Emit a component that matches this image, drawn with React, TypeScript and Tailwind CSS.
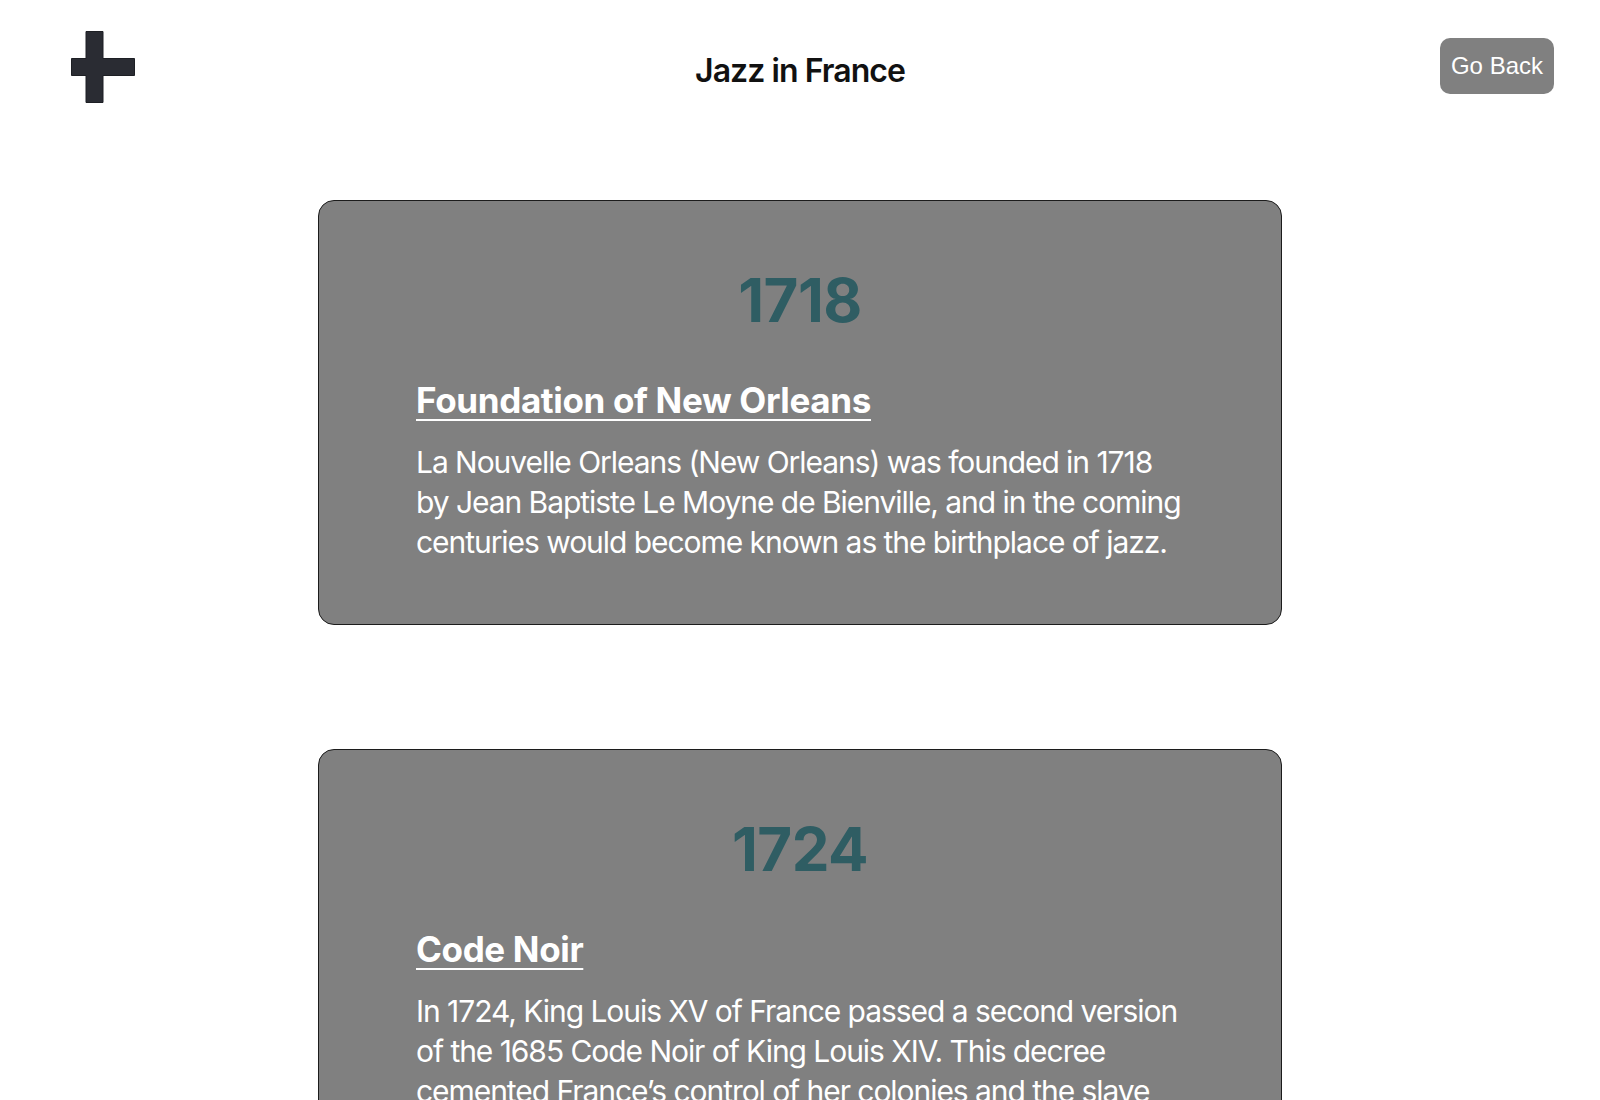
const events = [
  {
    year: "1718",
    title: "Foundation of New Orleans",
    lines: [
      "La Nouvelle Orleans (New Orleans) was founded in 1718",
      "by Jean Baptiste Le Moyne de Bienville, and in the coming",
      "centuries would become known as the birthplace of jazz.",
    ],
  },
  {
    year: "1724",
    title: "Code Noir",
    lines: [
      "In 1724, King Louis XV of France passed a second version",
      "of the 1685 Code Noir of King Louis XIV. This decree",
      "cemented France’s control of her colonies and the slave",
      "trade, and set the rules for the lives of enslaved people.",
    ],
  },
];

function PlusIcon() {
  return (
    <svg width="64" height="72" viewBox="0 0 64 72" className="block">
      <path
        d="M15 0.5h17v27h31.5v17H32v27H15v-27H0.5v-17H15z"
        fill="#2a2c33"
        stroke="#1d1f24"
        strokeWidth="1"
      />
    </svg>
  );
}

export default function App() {
  return (
    <div className="min-h-screen bg-white font-['Inter',sans-serif]">
      <header className="grid grid-cols-[1fr_auto_1fr] items-start pt-[31px]">
        <div className="ml-[71px] justify-self-start">
          <PlusIcon />
        </div>
        <h1 className="mt-[24px] text-[32px] font-semibold leading-none tracking-[-0.03em] text-[#111111]">
          Jazz in France
        </h1>
        <button className="mr-[46px] mt-[7px] flex h-[56px] items-center justify-self-end rounded-[10px] bg-[#808080] px-[11px] font-['Liberation_Sans',sans-serif] text-[24px] text-white">
          Go Back
        </button>
      </header>

      <main className="mt-[97px] flex flex-col items-center gap-[124px] pb-20">
        {events.map((ev) => (
          <section
            key={ev.year}
            className="w-[964px] rounded-[16px] border border-[#1c1c1c] bg-[#808080] pt-[69px] pb-[62px]"
          >
            <h2 className="text-center text-[60px] font-bold leading-none tracking-[-0.01em] text-[#2f5d63]">
              {ev.year}
            </h2>
            <div className="mx-auto mt-[53px] w-[768px]">
              <h3 className="text-[35px] font-bold leading-none tracking-[-0.01em] text-white underline decoration-[2px] underline-offset-[6px]">
                {ev.title}
              </h3>
              <p className="mt-[24px] text-[30px] leading-[40px] tracking-[-0.035em] text-white">
                {ev.lines.map((line) => (
                  <span key={line} className="block whitespace-nowrap">
                    {line}
                  </span>
                ))}
              </p>
            </div>
          </section>
        ))}
      </main>
    </div>
  );
}
